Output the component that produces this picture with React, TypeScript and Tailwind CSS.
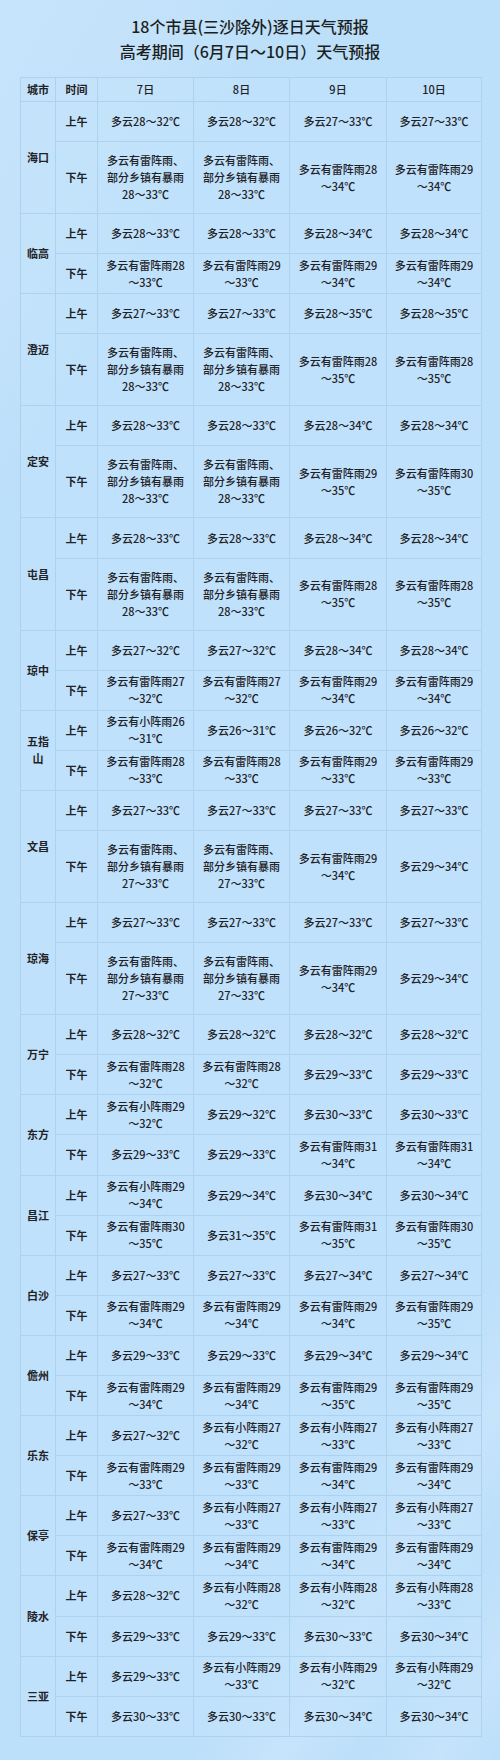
import React from 'react';

type Day = string;
type City = { name: string; am: Day[]; pm: Day[] };

const T = (r: string) => `多云有雷阵雨、\n部分乡镇有暴雨\n${r}℃`;
const L = (a: string, b: string) => `多云有雷阵雨${a}\n～${b}℃`;
const S = (a: string, b: string) => `多云有小阵雨${a}\n～${b}℃`;
const C = (r: string) => `多云${r}℃`;

const cities: City[] = [
    { name: '海口', am: [C('28～32'), C('28～32'), C('27～33'), C('27～33')], pm: [T('28～33'), T('28～33'), L('28', '34'), L('29', '34')] },
    { name: '临高', am: [C('28～33'), C('28～33'), C('28～34'), C('28～34')], pm: [L('28', '33'), L('29', '33'), L('29', '34'), L('29', '34')] },
    { name: '澄迈', am: [C('27～33'), C('27～33'), C('28～35'), C('28～35')], pm: [T('28～33'), T('28～33'), L('28', '35'), L('28', '35')] },
    { name: '定安', am: [C('28～33'), C('28～33'), C('28～34'), C('28～34')], pm: [T('28～33'), T('28～33'), L('29', '35'), L('30', '35')] },
    { name: '屯昌', am: [C('28～33'), C('28～33'), C('28～34'), C('28～34')], pm: [T('28～33'), T('28～33'), L('28', '35'), L('28', '35')] },
    { name: '琼中', am: [C('27～32'), C('27～32'), C('28～34'), C('28～34')], pm: [L('27', '32'), L('27', '32'), L('29', '34'), L('29', '34')] },
    { name: '五指山', am: [S('26', '31'), C('26～31'), C('26～32'), C('26～32')], pm: [L('28', '33'), L('28', '33'), L('29', '33'), L('29', '33')] },
    { name: '文昌', am: [C('27～33'), C('27～33'), C('27～33'), C('27～33')], pm: [T('27～33'), T('27～33'), L('29', '34'), C('29～34')] },
    { name: '琼海', am: [C('27～33'), C('27～33'), C('27～33'), C('27～33')], pm: [T('27～33'), T('27～33'), L('29', '34'), C('29～34')] },
    { name: '万宁', am: [C('28～32'), C('28～32'), C('28～32'), C('28～32')], pm: [L('28', '32'), L('28', '32'), C('29～33'), C('29～33')] },
    { name: '东方', am: [S('29', '32'), C('29～32'), C('30～33'), C('30～33')], pm: [C('29～33'), C('29～33'), L('31', '34'), L('31', '34')] },
    { name: '昌江', am: [S('29', '34'), C('29～34'), C('30～34'), C('30～34')], pm: [L('30', '35'), C('31～35'), L('31', '35'), L('30', '35')] },
    { name: '白沙', am: [C('27～33'), C('27～33'), C('27～34'), C('27～34')], pm: [L('29', '34'), L('29', '34'), L('29', '34'), L('29', '35')] },
    { name: '儋州', am: [C('29～33'), C('29～33'), C('29～34'), C('29～34')], pm: [L('29', '34'), L('29', '34'), L('29', '35'), L('29', '35')] },
    { name: '乐东', am: [C('27～32'), S('27', '32'), S('27', '33'), S('27', '33')], pm: [L('29', '33'), L('29', '33'), L('29', '34'), L('29', '34')] },
    { name: '保亭', am: [C('27～33'), S('27', '33'), S('27', '33'), S('27', '33')], pm: [L('29', '34'), L('29', '34'), L('29', '34'), L('29', '34')] },
    { name: '陵水', am: [C('28～32'), S('28', '32'), S('28', '32'), S('28', '33')], pm: [C('29～33'), C('29～33'), C('30～33'), C('30～34')] },
    { name: '三亚', am: [C('29～33'), S('29', '33'), S('29', '32'), S('29', '32')], pm: [C('30～33'), C('30～33'), C('30～34'), C('30～34')] },
];

const cell = 'border border-[#acd2f0] text-center align-middle whitespace-pre-line';

function Row({ label, days, first, city }: { label: string; days: Day[]; first: boolean; city: City }) {
    const tall = days.some((d) => d.split('\n').length > 2);
    return (
        <tr className={tall ? 'h-[72px]' : 'h-[40.1px]'}>
            {first && (
                <td rowSpan={2} className={`${cell} px-[6px] font-semibold`}>
                    {city.name}
                </td>
            )}
            <td className={`${cell} font-semibold`}>{label}</td>
            {days.map((d, i) => (
                <td key={i} className={`${cell} px-[4px]`}>
                    {d}
                </td>
            ))}
        </tr>
    );
}

export default function App() {
    return (
        <div
            className="w-[500px] min-h-[1760px] bg-[#bcdffa] text-[#1f2327] font-['Noto_Sans_CJK_SC','Noto_Sans',sans-serif] bg-[linear-gradient(120deg,rgba(255,255,255,0.16)_0%,rgba(255,255,255,0.1)_12%,rgba(255,255,255,0)_20%),linear-gradient(122deg,rgba(255,255,255,0)_80%,rgba(255,255,255,0.16)_86%,rgba(255,255,255,0)_91%,rgba(255,255,255,0.14)_96%,rgba(255,255,255,0)_100%)]"
        >
            <div className="pt-[14px] pb-[13px] text-center text-[16px] leading-[25px] font-medium text-[#1c1f22]">
                <div>18个市县(三沙除外)逐日天气预报</div>
                <div>高考期间（6月7日～10日）天气预报</div>
            </div>
            <table className="ml-[20px] w-[461px] table-fixed border-collapse text-[11px] leading-[17px] font-medium bg-[#c4e4fc]/50">
                <colgroup>
                    <col className="w-[35px]" />
                    <col className="w-[42px]" />
                    <col className="w-[96px]" />
                    <col className="w-[96px]" />
                    <col className="w-[97px]" />
                    <col className="w-[95px]" />
                </colgroup>
                <thead>
                    <tr className="h-[24px]">
                        <th className={`${cell} font-semibold`}>城市</th>
                        <th className={`${cell} font-semibold`}>时间</th>
                        <th className={`${cell} font-medium`}>7日</th>
                        <th className={`${cell} font-medium`}>8日</th>
                        <th className={`${cell} font-medium`}>9日</th>
                        <th className={`${cell} font-medium`}>10日</th>
                    </tr>
                </thead>
                <tbody>
                    {cities.map((c) => (
                        <React.Fragment key={c.name}>
                            <Row label="上午" days={c.am} first city={c} />
                            <Row label="下午" days={c.pm} first={false} city={c} />
                        </React.Fragment>
                    ))}
                </tbody>
            </table>
        </div>
    );
}
